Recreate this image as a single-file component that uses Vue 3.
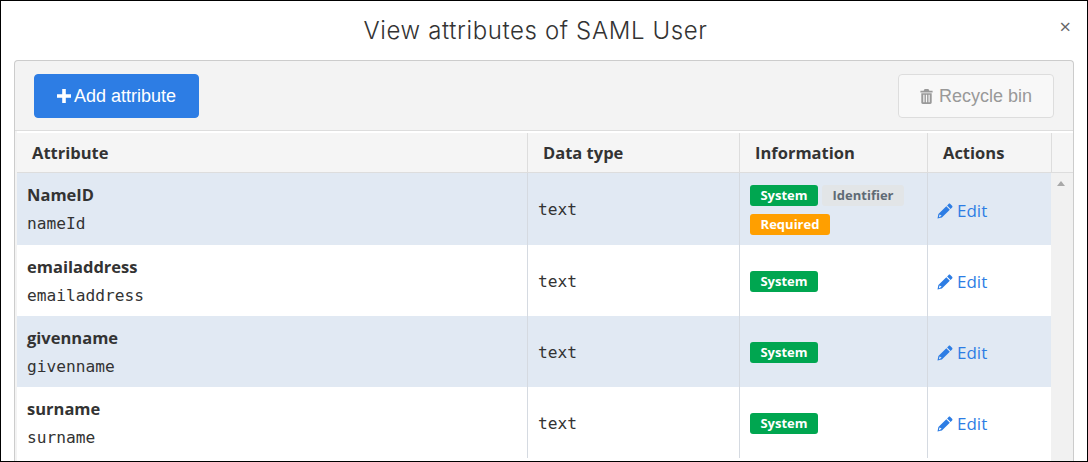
<script setup>
const rows = [
  { name: 'NameID', key: 'nameId', alt: true, badges: [['System', 'green'], ['Identifier', 'grey'], ['Required', 'orange']] },
  { name: 'emailaddress', key: 'emailaddress', badges: [['System', 'green']] },
  { name: 'givenname', key: 'givenname', alt: true, badges: [['System', 'green']] },
  { name: 'surname', key: 'surname', badges: [['System', 'green']] },
]
</script>

<template>
  <div class="frame">
    <header class="title-bar">
      <h1>View attributes of SAML User</h1>
      <span class="close">×</span>
    </header>
    <section class="panel">
      <div class="toolbar">
        <button class="btn primary">
          <svg class="plus" viewBox="0 0 14 14" width="14" height="14"><path d="M5.2 0h3.6v5.2H14v3.6H8.8V14H5.2V8.8H0V5.2h5.2z" fill="#fff"/></svg>
          Add attribute
        </button>
        <button class="btn bin">
          <svg class="trash" viewBox="0 0 13 15" width="13" height="15"><path fill="#999" d="M4.6 0h3.8l1 1.8h3.2v1.6H.4V1.8h3.2zM1.3 4.2h10.4v9.4c0 .8-.6 1.4-1.4 1.4H2.7c-.8 0-1.4-.6-1.4-1.4zm2 1.6v7.4h1.2V5.8zm2.6 0v7.4h1.2V5.8zm2.6 0v7.4h1.2V5.8z"/></svg>
          Recycle bin
        </button>
      </div>
      <div class="thead">
        <div class="th c1">Attribute</div>
        <div class="th c2">Data type</div>
        <div class="th c3">Information</div>
        <div class="th c4">Actions</div>
        <div class="th c5"></div>
      </div>
      <div class="tbody-wrap">
        <div class="tbody">
          <div v-for="r in rows" :key="r.key" class="row" :class="{ alt: r.alt }">
            <div class="td c1 name-cell">
              <strong>{{ r.name }}</strong>
              <code>{{ r.key }}</code>
            </div>
            <div class="td c2"><code>text</code></div>
            <div class="td c3 badges">
              <span v-for="b in r.badges" :key="b[0]" class="badge" :class="b[1]">{{ b[0] }}</span>
            </div>
            <div class="td c4">
              <a class="edit">
                <svg viewBox="0 0 16 16" width="16" height="16"><path fill="#2d7de4" d="M11.6.9c.5-.5 1.2-.5 1.7 0l1.8 1.8c.5.5.5 1.2 0 1.7l-1.5 1.5-3.5-3.5zM9.3 3.2l3.5 3.5-7.9 7.9-4.4 1 .9-4.5zM2.5 11.6l-.5 2.4 1.2.2.3-1.3 1.3-.3z"/></svg>
                Edit
              </a>
            </div>
          </div>
        </div>
        <div class="scrollbar"><span class="arrow"></span></div>
      </div>
    </section>
  </div>
</template>

<style scoped>
.frame {
  box-sizing: border-box;
  width: 1088px;
  height: 462px;
  border: 1px solid #000;
  background: #fff;
  padding: 0 13px 0 13px;
  overflow: hidden;
  display: flex;
  flex-direction: column;
}
.title-bar {
  height: 59px;
  flex: none;
  display: flex;
  align-items: center;
  justify-content: center;
  position: relative;
}
h1 {
  margin: 0 17px 0 0;
  font: 300 24px/30px Inter, "Open Sans", sans-serif;
  letter-spacing: 0.62px;
  color: #333;
}
.close {
  position: absolute;
  right: 3px;
  top: 14px;
  font: 400 20px/24px "Open Sans", sans-serif;
  color: #666;
}
.panel {
  flex: 1;
  min-height: 0;
  border: 1px solid #ccc;
  border-bottom: 0;
  border-radius: 4px 4px 0 0;
  background: #f3f3f3;
  display: flex;
  flex-direction: column;
  overflow: hidden;
}
.toolbar {
  flex: none;
  height: 70px;
  padding: 13px 19px 0;
  box-sizing: border-box;
  display: flex;
  justify-content: space-between;
  align-items: flex-start;
  border-bottom: 1px solid #ddd;
}
.btn {
  height: 44px;
  box-sizing: border-box;
  border-radius: 4px;
  font: 400 18px/22px "Liberation Sans", Arial, sans-serif;
  display: flex;
  align-items: center;
  justify-content: center;
  gap: 3px;
  padding: 0;
}
.primary {
  width: 165px;
  background: #2d7de4;
  border: 1px solid #2d7de4;
  color: #fff;
}
.bin {
  width: 156px;
  background: #f8f8f8;
  border: 1px solid #ddd;
  color: #999;
  gap: 6px;
}
.thead {
  flex: none;
  height: 42px;
  margin-left: 2px;
  display: flex;
  background: #f5f5f5;
  border-top: 2px solid #fff;
  border-bottom: 1px solid #ddd;
  box-sizing: border-box;
}
.th {
  box-sizing: border-box;
  display: flex;
  align-items: center;
  font: 700 16.5px/22px "Open Sans", "Noto Sans", sans-serif;
  color: #333;
  border-right: 1px solid #ddd;
  padding-left: 15px;
}
.c1 { width: 511px; }
.c2 { width: 212px; }
.c3 { width: 188px; }
.c4 { width: 124px; }
.c5 { flex: 1; border-right: 0; padding: 0; }
.tbody-wrap {
  flex: 1;
  min-height: 0;
  display: flex;
  margin-left: 2px;
}
.tbody {
  width: 1034px;
  background: #fff;
}
.scrollbar {
  flex: 1;
  background: #f1f1f1;
  position: relative;
}
.arrow {
  position: absolute;
  left: 6px;
  top: 8px;
  width: 0;
  height: 0;
  border: 4.5px solid transparent;
  border-top: 0;
  border-bottom: 5px solid #a8a8a8;
}
.row {
  display: flex;
  height: 71px;
}
.row:first-child { height: 72px; }
.row.alt { background: #e1e9f3; }
.td {
  box-sizing: border-box;
  display: flex;
  align-items: center;
  border-right: 1px solid #d5dae1;
  padding: 2px 0 0 10px;
}
.td.c2 { padding-left: 10px; }
.td.c4 { border-right: 0; padding: 3px 0 0 9px; width: 123px; }
.name-cell {
  flex-direction: column;
  align-items: flex-start;
  justify-content: center;
  gap: 6px;
  padding-top: 0;
}
strong {
  font: 700 16.5px/22px "Open Sans", "Noto Sans", sans-serif;
  color: #333;
}
code {
  font: 400 16.2px/22px "DejaVu Sans Mono", monospace;
  color: #333;
  position: relative;
  top: 1px;
}
.td.c2 code { top: 0; }
.badges {
  flex-wrap: wrap;
  align-content: center;
  gap: 8px 4px;
  padding-right: 4px;
}
.badge {
  height: 21px;
  border-radius: 3px;
  font: 700 13px/21px "Open Sans", "Noto Sans", sans-serif;
  text-align: center;
  color: #fff;
}
.green { background: #00a650; width: 68px; }
.orange { background: #ff9f00; width: 80px; }
.grey { background: #e2e5e7; color: #5f6b75; width: 82px; }
.edit {
  display: flex;
  align-items: center;
  gap: 4px;
  font: 400 17px/22px "Open Sans", "Noto Sans", sans-serif;
  color: #2d7de4;
}
</style>
